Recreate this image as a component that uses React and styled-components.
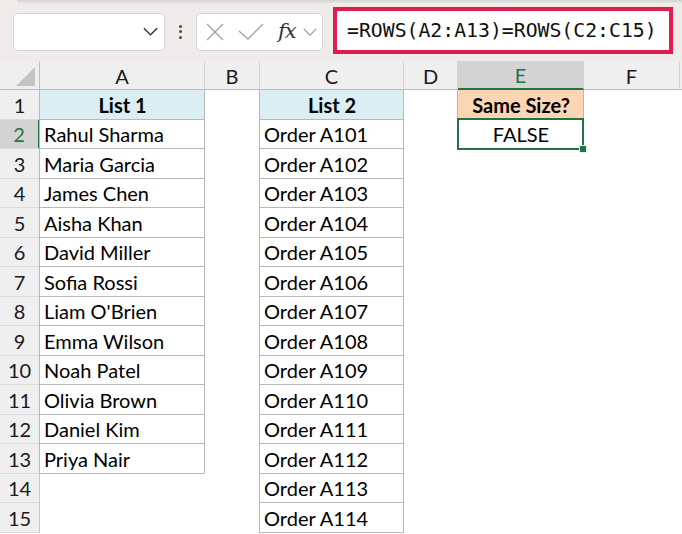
import React from "react";
import styled, { createGlobalStyle, css } from "styled-components";

const GlobalStyle = createGlobalStyle`
  html, body { margin: 0; padding: 0; background: #ffffff; }
  body { font-family: Lato, "Noto Sans", sans-serif; color: #000; }
  * { box-sizing: border-box; }
`;

const GREEN = "#217346";
const TABLE_BORDER = "#b8b8b8";

const Window = styled.div`
  width: 682px;
  height: 534px;
  overflow: hidden;
  display: flex;
  flex-direction: column;
  background: #fff;
`;

const Toolbar = styled.div`
  height: 61px;
  display: flex;
  flex-direction: column;
  background: #efebeb;
  flex-shrink: 0;
`;

const TopEdge = styled.div`
  height: 3px;
  margin-left: 17px;
  background: linear-gradient(#d4d2d2, #e6e3e3);
`;

const Bar = styled.div`
  flex: 1;
  display: flex;
  align-items: center;
  padding-left: 13px;
  padding-bottom: 1px;
`;

const NameBox = styled.div`
  width: 152px;
  height: 38px;
  background: #fff;
  border: 1px solid #d8d4d4;
  border-radius: 5px;
  display: flex;
  align-items: center;
  justify-content: flex-end;
  padding-right: 6px;
`;

const DotsWrap = styled.div`
  width: 31px;
  display: flex;
  flex-direction: column;
  align-items: center;
  gap: 2.5px;
`;

const Dot = styled.span`
  width: 3px;
  height: 3px;
  border-radius: 50%;
  background: #4a4a4a;
`;

const FxGroup = styled.div`
  width: 127px;
  height: 38px;
  background: #fff;
  border: 1px solid #d8d4d4;
  border-radius: 5px;
  display: flex;
  align-items: center;
  padding-left: 9px;
`;

const FxText = styled.span`
  font-family: "DejaVu Serif", "Liberation Serif", serif;
  font-style: italic;
  font-size: 21px;
  color: #333;
  margin-left: 14px;
  line-height: 1;
  letter-spacing: -1px;
`;

const SmallChevron = styled.span`
  margin-left: 7px;
  display: flex;
`;

const FormulaBox = styled.div`
  margin-left: 10px;
  width: 340px;
  height: 47px;
  margin-top: -3px;
  background: #fff;
  border: 4px solid #e21b4d;
  display: flex;
  align-items: center;
  padding-left: 10px;
  font-family: "DejaVu Sans Mono", "Liberation Mono", monospace;
  font-size: 19.8px;
  color: #111;
  white-space: nowrap;
`;

const Sheet = styled.div`
  display: grid;
  grid-template-columns: 40px 165px 55px 144px 54px 126px 96px 1fr;
  grid-template-rows: 29px repeat(7, 30px 29px) 30px;
  font-family: Lato, "Noto Sans", sans-serif;
  font-size: 20px;
`;

const ColHead = styled.div`
  background: ${(p) => (p.$selected ? "#d3d3d3" : "#efefef")};
  border-right: 1px solid #d3d3d3;
  border-bottom: ${(p) => (p.$selected ? `2px solid ${GREEN}` : "1px solid #bdbdbd")};
  color: ${(p) => (p.$selected ? GREEN : "#1a1a1a")};
  display: flex;
  align-items: center;
  justify-content: center;
  padding-top: 1px;
`;

const Corner = styled(ColHead)`
  align-items: flex-end;
  justify-content: flex-end;
  padding: 0 4px 3px 0;
  border-right: 1px solid #bdbdbd;
`;

const RowHead = styled.div`
  background: ${(p) => (p.$selected ? "#d3d3d3" : "#efefef")};
  border-bottom: 1px solid #dadada;
  border-right: ${(p) => (p.$selected ? `2px solid ${GREEN}` : "1px solid #c8c8c8")};
  color: ${(p) => (p.$selected ? GREEN : "#1a1a1a")};
  display: flex;
  align-items: center;
  justify-content: center;
`;

const Cell = styled.div`
  position: relative;
  display: flex;
  align-items: center;
  padding: 0 3px 0 4px;
  white-space: nowrap;
  background: ${(p) => p.$fill || "transparent"};
  font-weight: ${(p) => (p.$bold ? 700 : 400)};
  justify-content: ${(p) => (p.$center ? "center" : "flex-start")};
  ${(p) =>
    p.$bordered &&
    css`
      margin-left: -1px;
      border-left: 1px solid ${TABLE_BORDER};
      border-right: 1px solid ${TABLE_BORDER};
      border-bottom: 1px solid ${TABLE_BORDER};
    `}
`;

const Selection = styled.div`
  position: absolute;
  top: -2px;
  left: -1px;
  right: -1px;
  bottom: -2px;
  border: 2px solid ${GREEN};
  pointer-events: none;
`;

const Handle = styled.div`
  position: absolute;
  right: -5px;
  bottom: -5px;
  width: 8px;
  height: 8px;
  background: ${GREEN};
  border: 1px solid #e8f0ea;
`;

const Chevron = ({ w, h, color, sw }) => (
  <svg width={w} height={h} viewBox="0 0 16 9">
    <polyline points="1,1 8,8 15,1" fill="none" stroke={color} strokeWidth={sw} />
  </svg>
);

const listA = [
  "Rahul Sharma",
  "Maria Garcia",
  "James Chen",
  "Aisha Khan",
  "David Miller",
  "Sofia Rossi",
  "Liam O'Brien",
  "Emma Wilson",
  "Noah Patel",
  "Olivia Brown",
  "Daniel Kim",
  "Priya Nair",
];
const listC = Array.from({ length: 14 }, (_, i) => `Order A${101 + i}`);
const columns = ["A", "B", "C", "D", "E", "F", ""];

export default function App() {
  const rows = [];
  for (let r = 1; r <= 15; r++) {
    const sel = r === 2;
    rows.push(
      <RowHead key={`rh${r}`} $selected={sel}>
        {r}
      </RowHead>
    );
    if (r === 1) {
      rows.push(
        <Cell key={`a${r}`} $bordered $fill="#daeef3" $bold $center>
          List 1
        </Cell>
      );
    } else if (r <= 13) {
      rows.push(
        <Cell key={`a${r}`} $bordered>
          {listA[r - 2]}
        </Cell>
      );
    } else rows.push(<Cell key={`a${r}`} />);
    rows.push(<Cell key={`b${r}`} />);
    if (r === 1) {
      rows.push(
        <Cell key={`c${r}`} $bordered $fill="#daeef3" $bold $center>
          List 2
        </Cell>
      );
    } else {
      rows.push(
        <Cell key={`c${r}`} $bordered>
          {listC[r - 2]}
        </Cell>
      );
    }
    rows.push(<Cell key={`d${r}`} />);
    if (r === 1) {
      rows.push(
        <Cell key={`e${r}`} $bordered $fill="#fcd5b4" $bold $center>
          Same Size?
        </Cell>
      );
    } else if (r === 2) {
      rows.push(
        <Cell key={`e${r}`} $bordered $center>
          FALSE
          <Selection>
            <Handle />
          </Selection>
        </Cell>
      );
    } else rows.push(<Cell key={`e${r}`} />);
    rows.push(<Cell key={`f${r}`} />);
    rows.push(<Cell key={`g${r}`} />);
  }

  return (
    <Window>
      <GlobalStyle />
      <Toolbar>
        <TopEdge />
        <Bar>
          <NameBox>
            <Chevron w={15} h={9} color="#333" sw={1.6} />
          </NameBox>
          <DotsWrap>
            <Dot />
            <Dot />
            <Dot />
          </DotsWrap>
          <FxGroup>
            <svg width="18" height="18" viewBox="0 0 18 18">
              <path d="M1 1 L17 17 M17 1 L1 17" stroke="#a3a3a3" strokeWidth="1.4" fill="none" />
            </svg>
            <svg width="26" height="17" viewBox="0 0 26 17" style={{ marginLeft: 14 }}>
              <polyline points="1,8 10,16 25,1" stroke="#a3a3a3" strokeWidth="1.4" fill="none" />
            </svg>
            <FxText>fx</FxText>
            <SmallChevron>
              <Chevron w={14} h={8} color="#9a9a9a" sw={1.4} />
            </SmallChevron>
          </FxGroup>
          <FormulaBox>=ROWS(A2:A13)=ROWS(C2:C15)</FormulaBox>
        </Bar>
      </Toolbar>
      <Sheet>
        <Corner>
          <svg width="19" height="19" viewBox="0 0 19 19">
            <polygon points="19,0 19,19 0,19" fill="#c4c4c4" />
          </svg>
        </Corner>
        {columns.map((c) => (
          <ColHead key={`h${c}`} $selected={c === "E"}>
            {c}
          </ColHead>
        ))}
        {rows}
      </Sheet>
    </Window>
  );
}
